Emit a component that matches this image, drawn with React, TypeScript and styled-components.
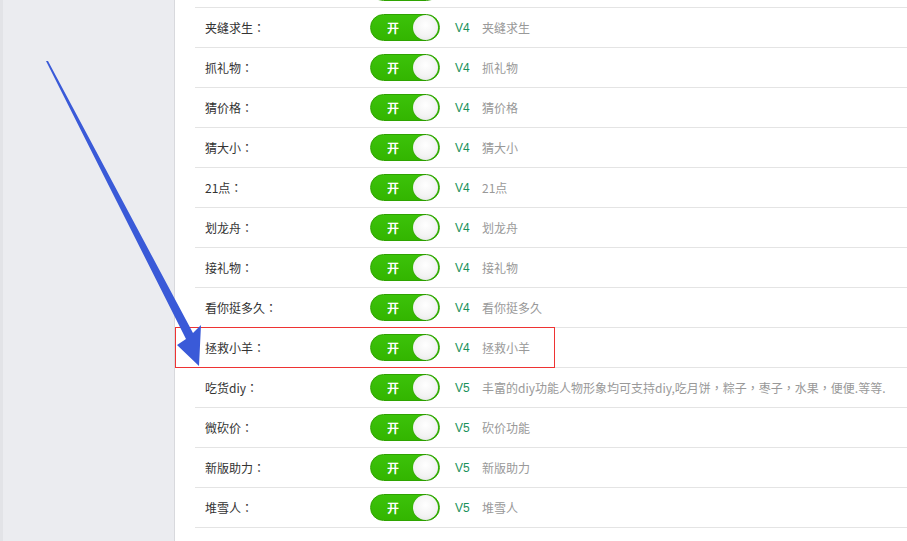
import * as React from 'react';
import styled, { createGlobalStyle } from 'styled-components';

type Game = { name: string; ver: string; desc: string; marked?: boolean };

const games: Game[] = [
	{ name: '', ver: '', desc: '' },
	{ name: '夹缝求生', ver: 'V4', desc: '夹缝求生' },
	{ name: '抓礼物', ver: 'V4', desc: '抓礼物' },
	{ name: '猜价格', ver: 'V4', desc: '猜价格' },
	{ name: '猜大小', ver: 'V4', desc: '猜大小' },
	{ name: '21点', ver: 'V4', desc: '21点' },
	{ name: '划龙舟', ver: 'V4', desc: '划龙舟' },
	{ name: '接礼物', ver: 'V4', desc: '接礼物' },
	{ name: '看你挺多久', ver: 'V4', desc: '看你挺多久' },
	{ name: '拯救小羊', ver: 'V4', desc: '拯救小羊', marked: true },
	{
		name: '吃货diy',
		ver: 'V5',
		desc: '丰富的diy功能人物形象均可支持diy,吃月饼，粽子，枣子，水果，便便.等等.',
	},
	{ name: '微砍价', ver: 'V5', desc: '砍价功能' },
	{ name: '新版助力', ver: 'V5', desc: '新版助力' },
	{ name: '堆雪人', ver: 'V5', desc: '堆雪人' },
];

const App = () => {
	return (
		<>
			<GlobalStyle />
			<Page>
				<Sidebar />
				<Main>
					<List>
						{games.map((g, i) => (
							<Row key={i}>
								{g.marked && <Mark />}
								<Label>{g.name ? g.name + '：' : ''}</Label>
								<Toggle>
									{g.name && <ToggleText>开</ToggleText>}
									<Knob />
								</Toggle>
								<Version>{g.ver}</Version>
								<Desc>{g.desc}</Desc>
							</Row>
						))}
					</List>
				</Main>
				<Arrow viewBox="0 0 907 541">
					<polygon points="46,61 48,61 193,333 201,325 199,366 177,345 186,339" fill="#3a5ad8" />
				</Arrow>
			</Page>
		</>
	);
};

const GlobalStyle = createGlobalStyle`
	html, body {
		margin: 0;
		padding: 0;
		background: #fff;
	}
	body {
		font-family: "Noto Sans CJK TC", "Noto Sans CJK SC", "Liberation Sans", sans-serif;
		font-size: 12px;
	}
`;

const Page = styled.div`
	position: relative;
	display: flex;
	width: 907px;
	height: 541px;
	overflow: hidden;
`;

const Sidebar = styled.div`
	flex: 0 0 171px;
	background: #ebecf0;
	border-left: 3px solid #e2e3e7;
	border-right: 1px solid #d8d9dd;
`;

const Main = styled.div`
	flex: 1;
	padding-left: 20px;
	background: #fff;
`;

const List = styled.div`
	margin-top: -32px;
`;

const Row = styled.div`
	position: relative;
	display: flex;
	align-items: center;
	height: 39px;
	padding-left: 10px;
	border-bottom: 1px solid #e4e4e4;
`;

const Mark = styled.div`
	position: absolute;
	left: -20px;
	top: -1px;
	width: 378px;
	height: 39px;
	border: 1px solid #ee3333;
`;

const Label = styled.div`
	width: 165px;
	color: #333;
	font-size: 12px;
`;

const Toggle = styled.div`
	position: relative;
	box-sizing: border-box;
	width: 70px;
	height: 27px;
	border-radius: 14px;
	background: linear-gradient(#3cc20a, #33b600);
	border: 1px solid #2ea400;
	display: flex;
	align-items: center;
`;

const ToggleText = styled.span`
	margin-left: 16px;
	color: #fff;
	font-weight: bold;
	font-size: 12px;
`;

const Knob = styled.span`
	position: absolute;
	right: 1px;
	top: 0px;
	width: 25px;
	height: 25px;
	border-radius: 50%;
	background: radial-gradient(circle at 50% 40%, #ffffff 0%, #f2f2f2 60%, #dcdcdc 100%);
	box-shadow: 0 0 1px rgba(0, 0, 0, 0.3);
`;

const Version = styled.span`
	margin-left: 15px;
	width: 27px;
	color: #1a915a;
	font-size: 12px;
	font-family: "Liberation Sans", sans-serif;
`;

const Desc = styled.span`
	color: #999;
	font-size: 12px;
	white-space: nowrap;
`;

const Arrow = styled.svg`
	position: absolute;
	left: 0;
	top: 0;
	width: 907px;
	height: 541px;
	pointer-events: none;
`;

export default App;
